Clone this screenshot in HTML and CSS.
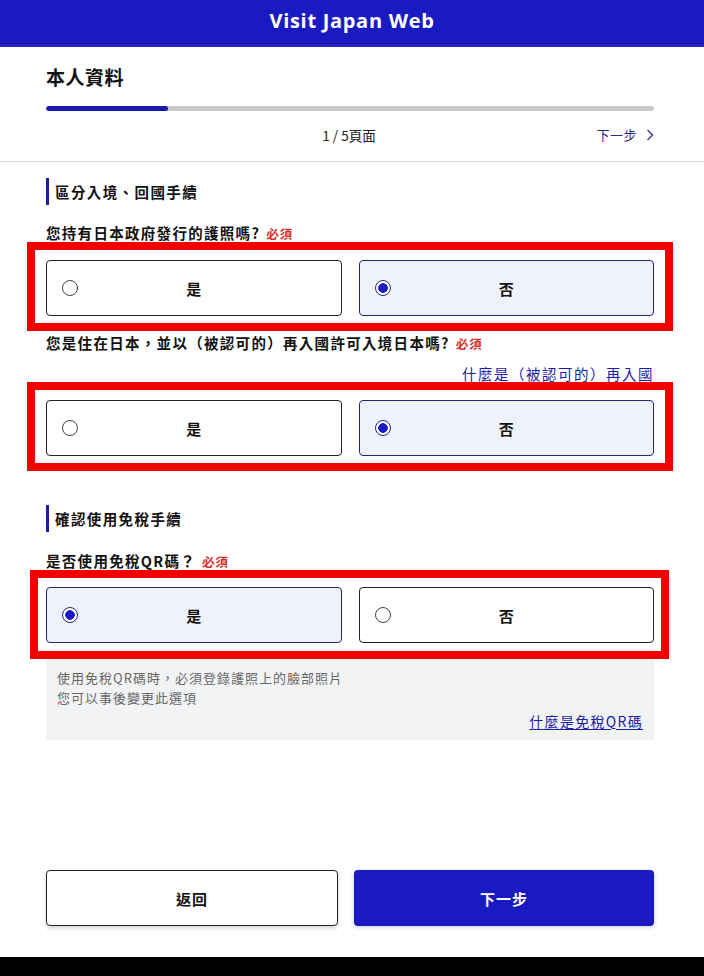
FILE: index.html
```html
<!DOCTYPE html>
<html lang="zh-Hant">
<head>
<meta charset="utf-8">
<title>Visit Japan Web</title>
<link rel="stylesheet" href="styles.css">
</head>
<body>
<header class="app-header">
  <h1 class="app-title">Visit Japan Web</h1>
</header>

<section class="page-top">
  <h2 class="page-title">本人資料</h2>
  <div class="progress"><div class="progress-fill" style="width:20%"></div></div>
  <div class="pager">
    <span class="pager-count">1 / 5頁面</span>
    <a class="pager-next" href="#">下一步
      <svg class="chev" width="8" height="12" viewBox="0 0 8 12"><path d="M1.5 1 L6.5 6 L1.5 11" fill="none" stroke="currentColor" stroke-width="1.4"/></svg>
    </a>
  </div>
</section>

<main class="content">
  <h3 class="section-heading">區分入境、回國手續</h3>

  <p class="question">您持有日本政府發行的護照嗎?<span class="required">必須</span></p>
  <div class="choice-group marked">
    <label class="choice"><span class="radio"></span><span class="choice-label">是</span></label>
    <label class="choice selected"><span class="radio"></span><span class="choice-label">否</span></label>
  </div>

  <p class="question q-second">您是住在日本，並以（被認可的）再入國許可入境日本嗎?<span class="required">必須</span></p>
  <div class="help-row"><a class="help-link" href="#">什麼是（被認可的）再入國</a></div>
  <div class="choice-group marked after-link">
    <label class="choice"><span class="radio"></span><span class="choice-label">是</span></label>
    <label class="choice selected"><span class="radio"></span><span class="choice-label">否</span></label>
  </div>

  <h3 class="section-heading second">確認使用免稅手續</h3>

  <p class="question q-third">是否使用免稅QR碼？<span class="required">必須</span></p>
  <div class="choice-group marked alt">
    <label class="choice selected"><span class="radio"></span><span class="choice-label">是</span></label>
    <label class="choice"><span class="radio"></span><span class="choice-label">否</span></label>
  </div>

  <div class="info-box">
    <p class="info-line">使用免稅QR碼時，必須登錄護照上的臉部照片</p>
    <p class="info-line">您可以事後變更此選項</p>
    <div class="info-link-row"><a class="help-link small" href="#">什麼是免稅QR碼</a></div>
  </div>

  <div class="actions">
    <button class="btn btn-back">返回</button>
    <button class="btn btn-next">下一步</button>
  </div>
</main>

<div class="bottom-bar"></div>
</body>
</html>
```

FILE: styles.css
```css
* { box-sizing: border-box; }

html, body {
  margin: 0;
  padding: 0;
  background: #ffffff;
}

body {
  width: 704px;
  height: 976px;
  overflow: hidden;
  font-family: "Noto Sans CJK TC", "Noto Sans", sans-serif;
  color: #111;
}

p, h1, h2, h3 { margin: 0; }

.app-header {
  height: 47px;
  background: #1a1ac2;
  border-bottom: 3px solid #2424c8;
  box-shadow: inset 0 -1px 0 #1212a0;
  display: flex;
  align-items: center;
  justify-content: center;
}

.app-title {
  font-family: "Open Sans", sans-serif;
  font-weight: 700;
  font-size: 20px;
  letter-spacing: 0.7px;
  color: #fff;
  line-height: 24px;
  margin-top: -2px;
}

.page-top {
  padding: 18px 50px 0 46px;
  border-bottom: 1px solid #d4d4d4;
}

.page-title {
  font-size: 19px;
  font-weight: 700;
  line-height: 24px;
  height: 24px;
  letter-spacing: 0.5px;
}

.progress {
  margin-top: 17px;
  height: 5px;
  border-radius: 3px;
  background: #c9c9c9;
  overflow: hidden;
}

.progress-fill {
  height: 100%;
  background: #1a1ab0;
  border-radius: 3px;
}

.pager {
  position: relative;
  margin-top: 14px;
  height: 20px;
  display: flex;
  align-items: center;
  justify-content: flex-end;
  margin-bottom: 16px;
}

.pager-count {
  position: absolute;
  left: 0;
  right: 0;
  text-align: center;
  font-size: 13.5px;
  line-height: 20px;
  color: #222;
  padding-right: 2px;
}

.pager-next {
  position: relative;
  font-size: 13px;
  line-height: 20px;
  color: #2a2a8c;
  text-decoration: none;
  display: flex;
  align-items: center;
  gap: 9px;
  letter-spacing: 0.5px;
}

.chev { color: #3a3a8c; }

.content {
  padding: 16px 50px 0 46px;
}

.section-heading {
  height: 27px;
  border-left: 3px solid #1a1ab0;
  padding-left: 6px;
  font-size: 14.5px;
  font-weight: 700;
  line-height: 27px;
  letter-spacing: 1.4px;
  color: #111;
}

.section-heading.second { margin-top: 49px; }

.question {
  margin-top: 18px;
  height: 20px;
  font-size: 14.5px;
  font-weight: 700;
  line-height: 20px;
  letter-spacing: 1.3px;
  color: #111;
  white-space: nowrap;
}

.question.q-second { margin-top: 17px; }
.question.q-third { margin-top: 19px; }

.required {
  font-size: 12.5px;
  line-height: 1;
  font-weight: 700;
  color: #d3302b;
  margin-left: 6px;
  letter-spacing: 1px;
}

.choice-group {
  position: relative;
  margin-top: 17px;
  display: grid;
  grid-template-columns: 1fr 1fr;
  gap: 17px;
}

.choice-group.alt { margin-top: 16px; }

.choice-group.marked::before {
  content: "";
  position: absolute;
  top: -18px;
  bottom: -15px;
  left: -19px;
  right: -19px;
  border: 8px solid #f20000;
  pointer-events: none;
}

.choice-group.marked.alt::before {
  top: -17px;
  bottom: -16px;
  left: -16px;
  right: -15px;
}

.help-row {
  margin-top: 10px;
  height: 20px;
  text-align: right;
  line-height: 20px;
}

.help-link {
  font-size: 14.5px;
  line-height: 20px;
  color: #1c1ca6;
  text-decoration: underline;
  text-underline-offset: 2px;
  letter-spacing: 1.5px;
}

.help-link.small { font-size: 14px; letter-spacing: 1.3px; }

.choice-group.after-link { margin-top: 17px; }

.choice {
  height: 56px;
  border: 1px solid #222;
  border-radius: 4px;
  background: #fff;
  display: grid;
  grid-template-columns: 16px 1fr 16px;
  align-items: center;
  padding: 0 15px;
}

.choice.selected {
  background: #eff2fc;
  border-color: #242482;
}

.radio {
  width: 16px;
  height: 16px;
  border-radius: 50%;
  border: 1px solid #444;
  background: #fff;
}

.choice.selected .radio {
  border: 1.5px solid #24248a;
  background: radial-gradient(circle, #1a1ac8 0 4.5px, #fff 5px);
}

.choice-label {
  text-align: center;
  font-size: 15px;
  font-weight: 700;
  color: #111;
}

.info-box {
  margin-top: 16px;
  background: #f2f3f5;
  padding: 9px 11px 10px 11px;
}

.info-line {
  height: 20px;
  font-size: 13px;
  line-height: 20px;
  color: #666;
  letter-spacing: 1px;
}

.info-link-row {
  margin-top: 2px;
  height: 20px;
  text-align: right;
  line-height: 20px;
}

.actions {
  margin-top: 130px;
  display: grid;
  grid-template-columns: 292px 1fr;
  gap: 16px;
}

.btn {
  height: 56px;
  border-radius: 4px;
  font-family: "Noto Sans CJK TC", "Noto Sans", sans-serif;
  font-size: 15px;
  font-weight: 700;
  letter-spacing: 1px;
  cursor: pointer;
}

.btn-back {
  background: #fff;
  border: 1px solid #222;
  color: #111;
  box-shadow: 0 2px 4px rgba(0,0,0,0.18);
}

.btn-next {
  background: #1a1ac2;
  border: none;
  color: #fff;
  box-shadow: 0 1px 4px rgba(30,30,200,0.25);
}

.bottom-bar {
  margin-top: 31px;
  height: 20px;
  background: #000;
}
```
